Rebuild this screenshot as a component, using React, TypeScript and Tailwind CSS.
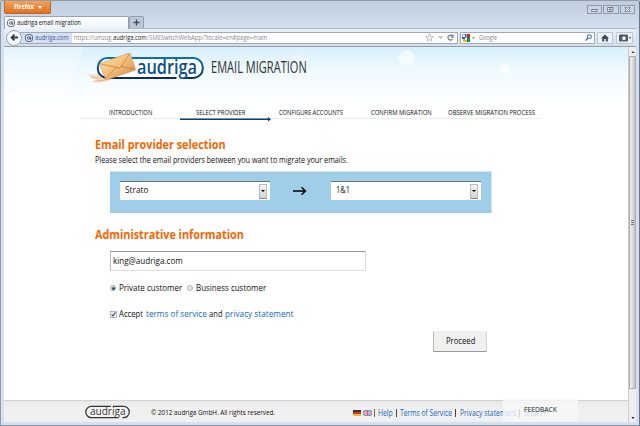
import { useLayoutEffect, useRef, useState } from "react";
import { clsx } from "clsx";

/* One line of text, set condensed or expanded to a given width. */
function Line({ text, w, className }: { text: string; w: number; className?: string }) {
  const ref = useRef<HTMLSpanElement>(null);
  const [k, setK] = useState(1);
  useLayoutEffect(() => {
    if (ref.current) setK(w / ref.current.offsetWidth);
  }, [w, text]);
  return (
    <span className={clsx("block shrink-0 whitespace-nowrap", className)} style={{ width: w }}>
      <span ref={ref} className="inline-block origin-left" style={{ transform: `scaleX(${k})` }}>
        {text}
      </span>
    </span>
  );
}

function AtIcon({ className }: { className?: string }) {
  return (
    <svg viewBox="0 0 16 16" className={clsx("shrink-0", className)} fill="none" stroke="#3c4560" strokeWidth="1.5">
      <rect x="1" y="1" width="14" height="14" rx="5" />
      <circle cx="7.6" cy="8" r="2.6" />
      <path d="M10.4 5v5c0 1.500 2 1 2-1" />
    </svg>
  );
}

function TitleBar() {
  return (
    <div className="flex h-[15px] items-start justify-between pr-[1px]">
      <div className="flex h-[13px] w-[47px] items-center justify-center gap-1 rounded-b-[2px] border border-t-0 border-[#b9682c] bg-linear-to-b from-[#f3a35c] to-[#e07318] text-white">
        <Line text="Firefox" w={20} className="text-[6.500px] leading-[12px] font-bold" />
        <svg viewBox="0 0 4 3" className="h-[3px] w-[4px]"><path d="M0 0h4L2 3z" fill="#fff" /></svg>
      </div>
      <div className="mt-[4px] flex gap-[1px]">
        {[0, 1, 2].map((i) => (
          <div key={i} className="flex h-[9px] w-[15.500px] items-center justify-center border border-[#8d9bb0] bg-[#c9d5e4]">
            <svg viewBox="0 0 7 5" className="h-[5px] w-[7px]" fill="#fff" stroke="#59616f" strokeWidth="0.8">
              {i === 0 && <rect x="0.8" y="2.600" width="5.200" height="1.700" />}
              {i === 1 && <><rect x="0.800" y="0.500" width="5" height="4" /><rect x="2.500" y="2" width="1.600" height="1" /></>}
              {i === 2 && <path d="M1 .5h1.500l1 1 1-1H6L4.700 2.500 6 4.500H4.500l-1-1-1 1H1l1.300-2z" />}
            </svg>
          </div>
        ))}
      </div>
    </div>
  );
}

function TabStrip() {
  return (
    <div className="flex h-[13px] border-b border-[#a9b6c8]">
      <div className="flex h-[13px] w-[125px] items-center rounded-t-[2px] border border-b-0 border-[#96a3b5] bg-linear-to-b from-white to-[#edf2fa] pl-[2px]">
        <AtIcon className="h-[8px] w-[8px]" />
        <Line text="audriga email migration" w={64} className="ml-[2px] text-[7px] leading-[12px] text-[#111]" />
      </div>
      <div className="flex h-[12px] w-[15px] items-center justify-center rounded-t-[2px] border border-b-0 border-[#929eaf] bg-[#bdc9d8]">
        <svg viewBox="0 0 7 7" className="h-[7px] w-[7px]"><path d="M3.500 .5v6M.5 3.500h6" stroke="#454c56" strokeWidth="1.300" /></svg>
      </div>
    </div>
  );
}

function NavBar() {
  return (
    <div className="flex h-[18px] items-center border-b border-[#9a9da4] bg-linear-to-b from-[#e8eff8] to-[#d2dfef] pl-[2px]">
      <div className="z-10 flex h-[16px] w-[16px] items-center justify-center rounded-full border border-[#9ca9bb] bg-[#f5f8fb]">
        <svg viewBox="0 0 10 8" className="h-[7px] w-[9px]"><path d="M9 4H2M5 .7L1.700 4 5 7.300" stroke="#343d49" strokeWidth="2.100" fill="none" /></svg>
      </div>
      <div className="-ml-[2px] flex h-[12px] w-[438px] items-center border border-[#a1aab5] bg-white">
        <div className="flex h-full w-[51px] items-center bg-[#d5e1f3] pl-[4px]">
          <AtIcon className="h-[8px] w-[8px]" />
          <Line text="audriga.com" w={34} className="ml-[2px] text-[7px] leading-[10px] text-[#3b5aa0]" />
        </div>
        <Line text="https://umzug." w={39} className="ml-[2px] text-[7px] leading-[10px] text-[#8b8b8b]" />
        <Line text="audriga.com" w={34} className="text-[7px] leading-[10px] text-[#222]" />
        <Line text="/SMESwitchWebApp/?locale=en#page=main" w={120} className="text-[7px] leading-[10px] text-[#8b8b8b]" />
        <div className="ml-auto flex items-center gap-[4px] pr-[3px]">
          <svg viewBox="0 0 10 10" className="h-[9px] w-[9px]"><path d="M5 .8l1.200 2.800 3 .3L7 6l.7 3L5 7.500 2.300 9 3 6 .8 3.900l3-.3z" fill="#f1f1f1" stroke="#b3b6ba" strokeWidth="0.900" /></svg>
          <svg viewBox="0 0 5 4" className="h-[4px] w-[5px]"><path d="M0 0h5L2.500 3.500z" fill="#c1c5ca" /></svg>
          <svg viewBox="0 0 8 8" className="h-[7px] w-[7px]"><path d="M6.300 5.800A2.900 2.900 0 1 1 6 2M6.800.5v3H4" fill="none" stroke="#727c89" strokeWidth="1.400" /></svg>
        </div>
      </div>
      <div className="ml-[2px] flex h-[12px] w-[135px] items-center border border-[#a1aab5] bg-white pl-[1px]">
        <svg viewBox="0 0 8 8" className="h-[8px] w-[8px]">
          <path d="M0 0h5v5H0z" fill="#8db2ee" /><path d="M5 0h3v3H5z" fill="#e21f20" /><path d="M5 3h3v5H5z" fill="#178b43" /><path d="M1 5h4v3H1z" fill="#f2b51e" />
          <path d="M0 3h3v2H0zM3 0h1v3H3z" fill="#285cbe" /><path d="M1 1h2v2H1zM3 4h2v2H3z" fill="#fff" />
        </svg>
        <svg viewBox="0 0 4 3" className="ml-[2px] h-[2px] w-[3px]"><path d="M0 0h4L2 3z" fill="#888" /></svg>
        <Line text="Google" w={18} className="ml-[4px] text-[7px] leading-[10px] text-[#858585]" />
        <svg viewBox="0 0 8 8" className="mr-[2px] ml-auto h-[7px] w-[7px]"><circle cx="5" cy="3" r="2.200" fill="#fff" stroke="#3672b5" strokeWidth="1.200" /><path d="M3.500 4.500L.7 7.400" stroke="#3672b5" strokeWidth="1.600" /></svg>
      </div>
      <div className="ml-[2px] flex h-[12px] w-[16px] items-center justify-center rounded-[1px] border border-[#bcc6d3] bg-[#edf2f8]">
        <svg viewBox="0 0 8 8" className="h-[8px] w-[8px]"><path d="M4 .5L0 4.300h1.200v3.200h2V5h1.600v2.500h2V4.300H8z" fill="#414b57" /></svg>
      </div>
      <div className="ml-[3px] flex h-[12px] w-[17px] items-center justify-center gap-[1px] rounded-[1px] border border-[#bcc6d3] bg-[#edf2f8]">
        <svg viewBox="0 0 9 8" className="h-[8px] w-[9px]"><rect y=".5" width="9" height="7" rx="1" fill="#4d5865" /><path d="M5 1.500l.8 1.700 1.700.2-1.200 1.200.3 1.800L5 5.500l-1.600.9.3-1.800-1.200-1.200 1.700-.2z" fill="#fff" /></svg>
        <svg viewBox="0 0 2 2" className="h-[2px] w-[2px]"><path d="M0 0h2L1 2z" fill="#333" /></svg>
      </div>
    </div>
  );
}

function Logo() {
  return (
    <svg viewBox="84 46 130 44" className="h-[44px] w-[130px] shrink-0">
      <defs>
        <linearGradient id="env" x1="0" y1="0" x2="1" y2="1"><stop offset="0" stopColor="#fde3ac" /><stop offset=".5" stopColor="#f3bf79" /><stop offset="1" stopColor="#cf8440" /></linearGradient>
        <linearGradient id="ring" x1="0" y1="0" x2="0" y2="1"><stop offset="0" stopColor="#0873b2" /><stop offset="1" stopColor="#07305f" /></linearGradient>
      </defs>
      <path d="M86 71c5 4 10 3 14 1l6 3 8 2c-5 4-17 6-24 3 4 0 7 0 9-1-6-1-10-4-13-8z" fill="#f8dcc0" />
      <path d="M91 76c6 2 11 1 15-1M94 80c7 0 12-1 17-4" stroke="#e3a67a" strokeWidth=".8" fill="none" />
      <rect x="97.800" y="57" width="105" height="19.900" rx="9.500" fill="#fff" stroke="url(#ring)" strokeWidth="2" />
      <path d="M176.500 75.500h7v3h-7z" fill="#fff" />
      <path d="M101 62l28-10q1 0 1.400 1l5 15q.2 1-1 1.400l-27 9.200q-1.400.4-2-1L99.700 64q-.3-1.500 1.300-2z" fill="url(#env)" stroke="#cf9457" strokeWidth=".6" />
      <path d="M101 63l18 4q1 0 1.800-1L129.500 53M106 77l10-10.500M134.500 68.500L121 65.500" fill="none" stroke="#b9783a" strokeWidth=".7" />
      <text x="137" y="72.500" textLength="60" lengthAdjust="spacingAndGlyphs" fontFamily="Open Sans, sans-serif" fontSize="20" fontWeight="600" fill="#07508c">audriga</text>
    </svg>
  );
}

function Steps() {
  return (
    <div className="ml-[76px] h-[14px] w-[462px]">
      <div className="flex h-[12px] items-start border-b border-[#ececec] text-[7.200px] leading-[10px]">
        <Line text="INTRODUCTION" w={43} className="ml-[29px]" />
        <Line text="SELECT PROVIDER" w={49} className="ml-[44px]" />
        <Line text="CONFIGURE ACCOUNTS" w={64} className="ml-[33.500px]" />
        <Line text="CONFIRM MIGRATION" w={61} className="ml-[28px]" />
        <Line text="OBSERVE MIGRATION PROCESS" w={87} className="ml-[16.500px]" />
      </div>
      <svg viewBox="0 0 92 5" className="-mt-[2px] ml-[100px] h-[5px] w-[92px]"><path d="M0 1.500h88V0L91 2.250 88 4.500V3H0z" fill="#064175" /></svg>
    </div>
  );
}

function Select({ value, w }: { value: string; w: number }) {
  return (
    <div className="flex h-[19px] w-[150px] items-center justify-between border-t border-[#6b7075] bg-white pr-[3px] pl-[5px]">
      <Line text={value} w={w} className="mb-[2px] text-[9px] leading-[16px]" />
      <span className="flex h-[15px] w-[8px] items-center justify-center border border-[#bbb] border-b-[#888] bg-linear-to-b from-[#f4f4f4] to-[#d4d4d4]">
        <svg viewBox="0 0 4 2" className="h-[2px] w-[4px]"><path d="M0 0h4L2 2z" fill="#000" /></svg>
      </span>
    </div>
  );
}

function Heading({ text, w }: { text: string; w: number }) {
  return <Line text={text} w={w} className="h-[16px] text-[12.500px] leading-[18px] font-bold text-[#fb6500]" />;
}

function ProviderForm() {
  return (
    <div className="ml-[91px] w-[420px]">
      <Heading text="Email provider selection" w={131} />
      <Line text="Please select the email providers between you want to migrate your emails." w={252.5} className="mt-[2px] h-[12px] text-[8.500px] leading-[12px]" />
      <div className="mt-[5px] ml-[15px] flex h-[42px] w-[382px] items-start border-t border-r border-[#cfe7f3] bg-[#a0cee8] pt-[9px] pl-[10px]">
        <Select value="Strato" w={23} />
        <svg viewBox="0 0 14 10" className="mr-[24px] ml-[23px] mt-[5px] h-[10px] w-[14px]"><path d="M0 5h12M8.500 1.300L12.500 5 8.500 8.700" fill="none" stroke="#000" strokeWidth="1.400" /></svg>
        <Select value="1&1" w={14} />
      </div>
      <div className="mt-[13px]"><Heading text="Administrative information" w={149} /></div>
      <div className="mt-[9px] ml-[15px] flex h-[20px] w-[256px] items-center border border-[#ddd] border-t-[#999] border-l-[#bbb] bg-white pl-[2px]">
        <Line text="king@audriga.com" w={70} className="text-[9px] leading-[16px]" />
      </div>
      <div className="mt-[11px] ml-[15px] flex h-[12px] items-center text-[9px] leading-[12px]">
        <span className="flex h-[6px] w-[6px] items-center justify-center rounded-full border border-[#a0a6ad] bg-[#e4edf4]"><span className="h-[3px] w-[3px] rounded-full bg-[#125b87]" /></span>
        <Line text="Private customer" w={63} className="ml-[3px]" />
        <span className="ml-[5px] h-[6px] w-[6px] rounded-full border border-[#b3b3b3] bg-[#e5e5e5]" />
        <Line text="Business customer" w={70} className="ml-[3px]" />
      </div>
      <div className="mt-[14px] ml-[15px] flex h-[12px] items-center text-[9px] leading-[12px]">
        <svg viewBox="0 0 7 7" className="h-[7px] w-[7px]"><rect x=".5" y=".5" width="6" height="6" fill="#edf0f5" stroke="#a3a8b0" strokeWidth=".8" /><path d="M1.700 3.400L3 5l2.400-3.600" fill="none" stroke="#40558b" strokeWidth="1.100" /></svg>
        <Line text="Accept" w={24} className="ml-[2px]" />
        <Line text="terms of service" w={61} className="ml-[3px] text-[#126bc5]" />
        <Line text="and" w={13.5} className="ml-[2px]" />
        <Line text="privacy statement" w={68.5} className="ml-[2.500px] text-[#126bc5]" />
      </div>
      <button className="mt-[11px] ml-[338px] flex h-[21px] w-[54px] items-center justify-center rounded-[1px] border border-[#bbb] border-t-[#eee] border-r-[#d5d5d5] border-b-[#999] bg-[#f0f0f0] pb-[1px]">
        <Line text="Proceed" w={29} className="text-[9px] leading-[16px]" />
      </button>
    </div>
  );
}

function Footer() {
  return (
    <footer className="relative flex h-[22px] items-center border-t border-[#d3d3d3] bg-linear-to-b from-[#e9e9e9] to-[#f0f0f0] to-30% text-[7.800px] leading-[10px]">
      <svg viewBox="0 0 46 14" className="ml-[81px] h-[14px] w-[46px] overflow-visible">
        <rect x=".8" y="1.300" width="43.500" height="11.400" rx="5.700" fill="#f5f5f5" stroke="#333" strokeWidth="1.200" />
        <path d="M25.800 0h2v2.300h-2zM33.500 11.500h4V14h-4z" fill="#efefef" />
        <text x="5" y="10" textLength="35.500" lengthAdjust="spacingAndGlyphs" fontFamily="Open Sans, sans-serif" fontSize="11.500" fill="#333">audriga</text>
      </svg>
      <Line text="© 2012 audriga GmbH. All rights reserved." w={124} className="ml-[20px]" />
      <div className="ml-[78px] flex h-full items-center pt-[2px] text-[8.200px] text-[#126bc5]">
        <svg viewBox="0 0 8 6" className="h-[6px] w-[8px]"><path d="M0 0h8v2H0z" fill="#333" /><path d="M0 2h8v2H0z" fill="#d83226" /><path d="M0 4h8v2H0z" fill="#e4bd3a" /></svg>
        <svg viewBox="0 0 9 6" className="ml-[2px] h-[6px] w-[9px]"><path d="M0 0h9v6H0z" fill="#5f78bd" /><path d="M0 0l9 6M9 0L0 6" stroke="#fff" strokeWidth=".8" /><path d="M4.500 0v6M0 3h9" stroke="#fff" strokeWidth="1.500" /><path d="M4.500 0v6M0 3h9" stroke="#dd4a53" strokeWidth=".9" /></svg>
        <span className="ml-[2px] h-[8px] w-[1px] bg-[#93592d]" />
        <Line text="Help" w={15} className="ml-[3px]" />
        <span className="ml-[3px] h-[8px] w-[1px] bg-[#633d27]" />
        <Line text="Terms of Service" w={52} className="ml-[3px]" />
        <span className="ml-[3px] h-[8px] w-[1px] bg-[#633d27]" />
        <Line text="Privacy statement" w={56.5} className="ml-[3.500px]" />
        <span className="ml-[3px] h-[8px] w-[1px] bg-[#633d27]" />
        <Line text="Imprint" w={23} className="ml-[4px]" />
      </div>
      <div className="absolute right-[50px] bottom-0 flex h-[24px] w-[75px] items-center bg-[#f7f7f7]/80 pb-[2px] pl-[21px] text-[#222]">
        <Line text="FEEDBACK" w={33} className="text-[7.800px] leading-[10px]" />
      </div>
    </footer>
  );
}

export default function App() {
  return (
    <div className="flex h-[426px] w-[640px] flex-col overflow-hidden rounded-t-[2px] border border-t-[#929ba8] border-r-[#69768b] border-b-[#8793a5] border-l-[#929ba8] bg-linear-to-b from-[#bfcddd] to-[#d5e1f0] to-[28px] px-[3px] pb-[3px] font-['Open_Sans',sans-serif] text-[#111]">
      <TitleBar />
      <TabStrip />
      <NavBar />
      <div className="flex h-[375px] shrink-0">
        <div className="flex w-[624px] flex-col bg-white">
          <div className="relative h-[57px] bg-linear-to-b from-[#d8f0fc] via-[#f1faff] via-45% to-white">
            <svg viewBox="0 0 624 57" className="absolute inset-0 h-[57px] w-[624px]" fill="#fff">
              <path d="M0 0h80L60 57H0z" opacity=".3" /><path d="M397 5l7-2 6 4 1 7-6 5-7-2-4-6z" opacity=".6" /><circle cx="501" cy="22" r="5.500" opacity=".65" /><path d="M280 15l12-8 12 4v6z" opacity=".35" />
            </svg>
            <div className="relative flex h-[43px] items-start pl-[80px]">
              <Logo />
              <Line text="EMAIL MIGRATION" w={96} className="-ml-[3px] mt-[9px] text-[16px] leading-[22px] text-[#333]" />
            </div>
          </div>
          <div className="mt-[3px]"><Steps /></div>
          <div className="mt-[15px]"><ProviderForm /></div>
          <div className="mt-auto"><Footer /></div>
        </div>
        <div className="flex w-[8px] flex-col items-center border-l border-[#ccc] bg-[#eeeeee]">
          <div className="flex h-[9px] items-center"><svg viewBox="0 0 3 2" className="h-[2px] w-[4px]"><path d="M0 2h3L1.500 0z" fill="#333" /></svg></div>
          <div className="flex h-[333px] w-[7px] flex-col items-center justify-center gap-[1px] rounded-[1px] border border-[#aaa] bg-linear-to-r from-[#f3f3f3] to-[#c5c5c9]">
            <span className="h-[1px] w-[3px] bg-[#777]" /><span className="h-[1px] w-[3px] bg-[#777]" /><span className="h-[1px] w-[3px] bg-[#777]" />
          </div>
          <div className="mt-auto flex h-[9px] items-center"><svg viewBox="0 0 3 2" className="h-[2px] w-[4px]"><path d="M0 0h3L1.500 2z" fill="#222" /></svg></div>
        </div>
      </div>
    </div>
  );
}
